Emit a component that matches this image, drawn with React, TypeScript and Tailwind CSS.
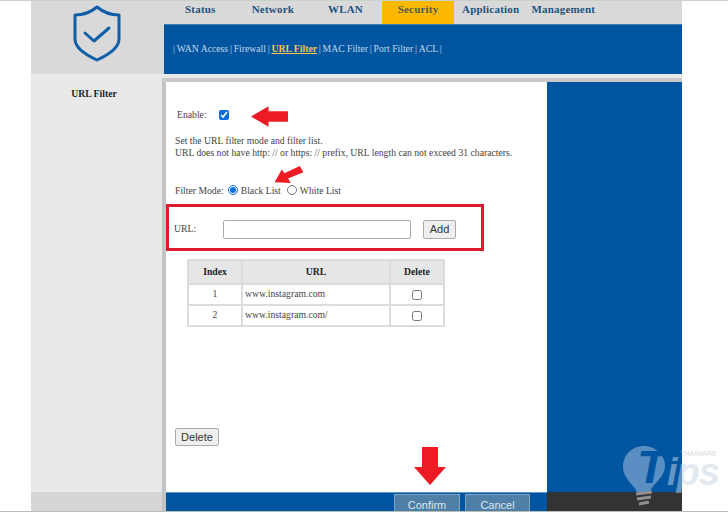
import React from 'react';

const tabs = ['Status', 'Network', 'WLAN', 'Security', 'Application', 'Management'];
const subLinks = ['WAN Access', 'Firewall', 'URL Filter', 'MAC Filter', 'Port Filter', 'ACL'];
const rows = ['www.instagram.com', 'www.instagram.com/'];

const App: React.FC = () => {
  return (
    <div className="relative h-[512px] w-[728px] overflow-hidden bg-white font-['Liberation_Serif',serif] text-[9.7px] text-[#444]">
      <div className="h-[1px] w-full bg-[#c5d3c8]" />
      <div className="ml-[31px] w-[651px]">
        {/* header */}
        <div className="flex h-[73px] bg-[#d9d9d9]">
          <div className="flex w-[133px] items-start justify-center pt-[3px]">
            <svg viewBox="0 0 50 58" className="mr-[2px] h-[58px] w-[50px]" fill="none" stroke="#0f5ea8" strokeWidth="3" strokeLinejoin="round" strokeLinecap="round">
              <path d="M25 3 C19 8 11 11 3 11 V35 C3 44 14 51 25 56 C36 51 47 44 47 35 V11 C39 11 31 8 25 3 Z" />
              <path d="M13 29 L22 37 L37 24" />
            </svg>
          </div>
          <div className="flex-1">
            <div className="flex h-[23px] text-[11px] font-bold leading-[14px] tracking-[0.2px] text-[#21527f]">
              {tabs.map((t) => (
                <div
                  key={t}
                  className={`flex w-[72.6px] justify-center whitespace-nowrap pt-[1px] ${t === 'Security' ? 'bg-[#fdb900] text-[#4e5a50]' : ''}`}
                >
                  {t}
                </div>
              ))}
            </div>
            <div className="flex h-[50px] items-center whitespace-nowrap border-t border-[#3f7fb8] bg-[#0055a0] pl-[9px] text-[#c5d6e8]">
              {subLinks.map((s) => (
                <React.Fragment key={s}>
                  <span>|</span>
                  {s === 'URL Filter' ? (
                    <span className="mx-[1.8px] font-bold text-[#f1c84b] underline">{s}</span>
                  ) : (
                    <span className="mx-[1.8px]">{s}</span>
                  )}
                </React.Fragment>
              ))}
              <span>|</span>
            </div>
          </div>
        </div>

        {/* body */}
        <div className="flex h-[418px] bg-[#e9e9e9]">
          <div className="w-[126px] pt-[13px] text-center font-bold text-[#222]">URL Filter</div>
          <div className="ml-[5px] flex-1 pt-[4px]">
            <div className="h-[4px] bg-[#c9c9c9]" />
            <div className="flex h-[410px]">
              <div className="w-[4px] bg-[#c4c4c4]" />
              <div className="flex w-[381px] flex-col items-start bg-white pl-[9px]">
                <label className="ml-[2px] mt-[27px] flex h-[12px] items-center">
                  <span className="w-[42px]">Enable:</span>
                  <input type="checkbox" defaultChecked className="h-[10px] w-[10px] accent-[#0b6ce0]" />
                </label>
                <p className="mt-[14px] whitespace-nowrap leading-[12px]">
                  Set the URL filter mode and filter list.
                  <br />
                  URL does not have http: // or https: // prefix, URL length can not exceed 31 characters.
                </p>
                <div className="mt-[25px] flex h-[14px] items-center">
                  <span>Filter Mode:</span>
                  <input type="radio" name="mode" defaultChecked className="mb-[2px] ml-[4px] h-[10px] w-[10px] accent-[#0b6ce0]" />
                  <span className="ml-[3px]">Black List</span>
                  <input type="radio" name="mode" className="mb-[2px] ml-[6px] h-[10px] w-[10px]" />
                  <span className="ml-[3px]">White List</span>
                </div>
                <div className="ml-[-9px] mt-[6px] flex h-[47px] w-[318px] items-center border-[3px] border-[#dc1c2e] pl-[5px] pt-[4px]">
                  <span className="w-[49px]">URL:</span>
                  <input className="h-[19px] w-[188px] rounded-[2px] border border-[#aaa] bg-white" />
                  <button className="ml-[12px] h-[19px] w-[33px] rounded-[2px] border border-[#aaa] bg-[#efefef] font-['Liberation_Sans',sans-serif] text-[11px] text-[#333]">
                    Add
                  </button>
                </div>
                <table className="ml-[12px] mt-[8px] w-[256px] table-fixed border-collapse">
                  <thead>
                    <tr className="h-[24px] bg-[#e6e6e6] font-bold text-[#222]">
                      <th className="w-[54px] border-2 border-[#dcdcdc]">Index</th>
                      <th className="w-[148px] border-2 border-[#dcdcdc]">URL</th>
                      <th className="w-[54px] border-2 border-[#dcdcdc]">Delete</th>
                    </tr>
                  </thead>
                  <tbody>
                    {rows.map((r, i) => (
                      <tr key={r} className="h-[21px]">
                        <td className="border-2 border-[#dcdcdc] text-center">{i + 1}</td>
                        <td className="border-2 border-[#dcdcdc] pl-[2px]">{r}</td>
                        <td className="border-2 border-[#dcdcdc] text-center">
                          <input type="checkbox" className="h-[10px] w-[10px] align-middle" />
                        </td>
                      </tr>
                    ))}
                  </tbody>
                </table>
                <button className="mt-[101px] h-[18px] w-[44px] rounded-[2px] border border-[#aaa] bg-[#efefef] font-['Liberation_Sans',sans-serif] text-[11px] text-[#333]">
                  Delete
                </button>
              </div>
              <div className="flex-1 bg-[#0055a0]" />
            </div>
          </div>
        </div>

        {/* footer */}
        <div className="flex h-[20px]">
          <div className="w-[131px] bg-[#d6d6d6]" />
          <div className="w-[4px] bg-[#c4c4c4]" />
          <div className="flex w-[381px] items-end justify-end gap-[5px] border-t border-[#5b9bd0] bg-[#0055a0] pr-[17px]">
            <div className="flex h-[18px] w-[66px] items-center justify-center border border-b-0 border-[#7fa4c4] bg-[#4f7fa6] pt-[3px] font-['Liberation_Sans',sans-serif] text-[11px] text-[#dbe6f0]">
              Confirm
            </div>
            <div className="flex h-[18px] w-[65px] items-center justify-center border border-b-0 border-[#7fa4c4] bg-[#4f7fa6] pt-[3px] font-['Liberation_Sans',sans-serif] text-[11px] text-[#dbe6f0]">
              Cancel
            </div>
          </div>
          <div className="flex-1 bg-[#333]" />
        </div>
      </div>

      {/* annotations */}
      <svg viewBox="0 0 38 21" className="absolute left-[251px] top-[106px] h-[21px] w-[37px]">
        <path d="M0 10.5 L18 0 V5 H38 V16 H18 V21 Z" fill="#ed1c24" />
      </svg>
      <svg viewBox="0 0 34 20" className="absolute left-[273px] top-[166px] h-[18px] w-[32px]">
        <path d="M1 18 L9 4 L12 8 L29 0 L33 7 L16 14 L19 19 Z" fill="#ed1c24" />
      </svg>
      <svg viewBox="0 0 32 38" className="absolute left-[414px] top-[447px] h-[38px] w-[32px]">
        <path d="M8 0 H24 V20 H32 L16 38 L0 20 H8 Z" fill="#ed1c24" />
      </svg>

      {/* watermark */}
      <svg viewBox="0 0 44 62" className="absolute left-[622px] top-[445px] h-[62px] w-[44px]">
        <path d="M22 1 C10 1 1 10 1 22 C1 33 10 38 15 47 H28 C31 38 43 33 43 20 C43 10 33 1 22 1 Z" fill="#5b8fc4" />
        <path d="M14 49 L30 47 M15 54 L29 52 M17 59 L27 57" stroke="#8f8f8f" strokeWidth="3" />
      </svg>
      <span className="absolute left-[667px] top-[459px] font-['Liberation_Sans',sans-serif] text-[38px] font-bold italic leading-[26px] tracking-[-1px] text-[#c8d4e2]/50">
        ips
      </span>
      <span className="absolute left-[637px] top-[448px] font-['Liberation_Sans',sans-serif] text-[47px] font-bold italic leading-[38px] text-[#0055a0]">
        T
      </span>
      <span className="absolute left-[680px] top-[450px] font-['Liberation_Sans',sans-serif] text-[7px] leading-[8px] text-[#c8c8c8]/70">
        THAIWARE
      </span>
      <div className="absolute bottom-0 left-0 h-[1px] w-full bg-[#b5bfb8]" />
    </div>
  );
};

export default App;
